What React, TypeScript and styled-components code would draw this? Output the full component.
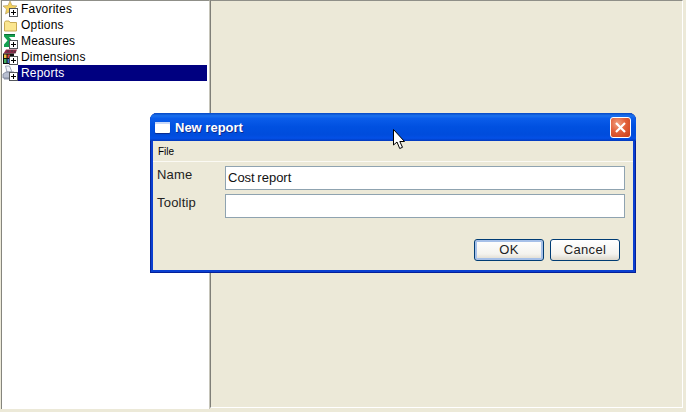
import React from 'react'
import styled, { createGlobalStyle } from 'styled-components'

const Global = createGlobalStyle`
  html, body { margin: 0; padding: 0; background: #ece9d8; }
  body { font-family: "Liberation Sans", Arial, sans-serif; }
`

const Screen = styled.div`
  position: relative;
  width: 686px;
  height: 412px;
  overflow: hidden;
  background: #ece9d8;
  display: flex;
  align-items: flex-start;
  padding-left: 1px;
  box-sizing: border-box;
`

const TreePanel = styled.div`
  width: 209px;
  height: 409px;
  box-sizing: border-box;
  background: #fff;
  border-top: 1px solid #8f8f88;
  border-left: 1px solid #85857d;
  border-right: 1px solid #c6c5ba;
`

const Row = styled.div`
  height: 16px;
  display: flex;
  align-items: center;
`

const IconSlot = styled.div`
  width: 16px;
  height: 16px;
  flex: none;
`

const RowLabel = styled.div<{ $selected?: boolean }>`
  flex: 1;
  height: 16px;
  margin-right: 2px;
  padding-left: 3px;
  font-size: 12px;
  letter-spacing: 0.2px;
  line-height: 16px;
  color: ${p => (p.$selected ? '#fff' : '#000')};
  background: ${p => (p.$selected ? '#000080' : 'transparent')};
`

const RightPanel = styled.div`
  flex: none;
  width: 473px;
  height: 408px;
  box-sizing: border-box;
  border-top: 1px solid #8f8f88;
  border-left: 1px solid #7f7f78;
  border-right: 1px solid #fff;
  border-bottom: 1px solid #fff;
`

const Dialog = styled.div`
  position: absolute;
  left: 150px;
  top: 113px;
  width: 486px;
  height: 160px;
  box-sizing: border-box;
  border-radius: 7px 7px 0 0;
  background: #0a3fd0;
  display: flex;
  flex-direction: column;
  padding: 0 3px 3px;
  box-shadow: inset 1px 0 0 #04249a, inset -1px 0 0 #04209a, inset 0 -1px 0 #04209a;
`

const TitleBar = styled.div`
  height: 28px;
  margin: 0 -3px;
  padding: 0 5px 0 5px;
  flex: none;
  border-radius: 7px 7px 0 0;
  display: flex;
  align-items: center;
  background: linear-gradient(180deg, #0648c4 0%, #1a70ee 10%, #0a5cea 20%, #0050e0 50%, #004cdc 78%, #0450e6 90%, #0238bc 100%);
`

const TitleIcon = styled.div`
  width: 15px;
  height: 11px;
  border-radius: 1px;
  background: #fff;
  box-shadow: inset 0 2px 0 #c8d8f8, 0 1px 1px #0a2a8a;
  margin-right: 5px;
`

const TitleText = styled.div`
  flex: 1;
  color: #fff;
  font-size: 13px;
  font-weight: bold;
  text-shadow: 1px 1px 0 #0a2a90;
`

const CloseButton = styled.div`
  width: 21px;
  height: 21px;
  box-sizing: border-box;
  border: 1px solid #fff;
  border-radius: 3px;
  background: radial-gradient(circle at 35% 30%, #f0a080 0%, #e2603a 45%, #c83c18 100%);
  display: flex;
  align-items: center;
  justify-content: center;
`

const Body = styled.div`
  flex: 1;
  background: #ece9d8;
  display: flex;
  flex-direction: column;
`

const MenuBar = styled.div`
  height: 21px;
  flex: none;
  box-sizing: border-box;
  border-bottom: 1px solid #fbfaf4;
  padding: 1px 0 0 5px;
  font-size: 10px;
  line-height: 20px;
  color: #000;
`

const Form = styled.div`
  flex: 1;
  padding: 4px 8px 0 4px;
  display: flex;
  flex-direction: column;
  gap: 4px;
`

const FieldRow = styled.div`
  display: flex;
  height: 24px;
`

const FieldLabel = styled.div`
  width: 68px;
  flex: none;
  font-size: 13px;
  letter-spacing: 0.2px;
  line-height: 18px;
  color: #222;
`

const FieldBox = styled.div`
  flex: 1;
  box-sizing: border-box;
  border: 1px solid #8fa3b0;
  background: #fff;
  padding-left: 2px;
  font-size: 13px;
  word-spacing: -1px;
  line-height: 21px;
  color: #111;
`

const Buttons = styled.div`
  display: flex;
  justify-content: flex-end;
  gap: 6px;
  margin-top: 17px;
  padding-right: 5px;
`

const Button = styled.div<{ $focused?: boolean }>`
  width: 70px;
  height: 22px;
  box-sizing: border-box;
  border: 1px solid #003c74;
  border-radius: 3px;
  font-size: 13px;
  letter-spacing: 0.3px;
  line-height: 20px;
  text-align: center;
  color: #222;
  background: linear-gradient(180deg, #ffffff 0%, #f4f3ee 70%, #dcd8cc 100%);
  box-shadow: ${p => (p.$focused ? 'inset 0 0 0 2px #a6c0e8' : 'none')};
`

const Cursor = styled.svg`
  position: absolute;
  left: 393px;
  top: 129px;
`

const Plus = () => (
  <g>
    <rect x="7.500" y="7.500" width="8" height="8" fill="#fff" stroke="#55585c" />
    <path d="M9 11.500h5M11.500 9v5" stroke="#000" />
  </g>
)

const StarIcon = () => (
  <svg width="16" height="16" viewBox="0 0 16 16">
    <path d="M8 0l2 4.500 5 .5-3.600 3.200 1 5L8 10.500 3.500 13l1-5L1 5l5-.5z" fill="#f4d25e" stroke="#b8a060" strokeWidth="0.7" />
    <Plus />
  </svg>
)

const FolderIcon = () => (
  <svg width="16" height="16" viewBox="0 0 16 16">
    <path d="M2.500 14V5.500l1-1.500h3.500l1 1.500h6.500V14z" fill="#fbe68f" stroke="#c8aa55" />
  </svg>
)

const SigmaIcon = () => (
  <svg width="16" height="16" viewBox="0 0 16 16">
    <path d="M2 1h11v3H7l3 3.500L7 11h6v3H2v-2.500L5.500 7.500 2 3.500z" fill="#14a050" />
    <path d="M2 1h11v1H3.500z" fill="#0c6a34" />
    <Plus />
  </svg>
)

const CubeIcon = () => (
  <svg width="16" height="16" viewBox="0 0 16 16">
    <path d="M4 .500h11L13.500 4.500H1.500z" fill="#8c2a4a" />
    <path d="M5 1.500h2v1H5zM9 1.500h2v1H9zM12 2.500h2v1h-2z" fill="#3a3a3a" />
    <rect x="1" y="4.500" width="11" height="10.500" fill="#111" />
    <rect x="2" y="5.500" width="2.500" height="3.500" fill="#f0c040" />
    <rect x="5.500" y="5.500" width="2.500" height="3.500" fill="#d04040" />
    <rect x="2" y="10" width="2.500" height="4" fill="#40b060" />
    <rect x="5.500" y="10" width="2.500" height="4" fill="#4070d0" />
    <Plus />
  </svg>
)

const ReportIcon = () => (
  <svg width="16" height="16" viewBox="0 0 16 16">
    <path d="M3.500 1h4l2.500 6H5z" fill="#f2f4fa" stroke="#8a94aa" strokeWidth="0.8" />
    <path d="M1 9l3-2h8l2 2v4H1z" fill="#b8bfd0" stroke="#7a8296" strokeWidth="0.8" />
    <path d="M2 13h10v1.500H2z" fill="#8e96aa" />
    <Plus />
  </svg>
)

const items = [
  { label: 'Favorites', icon: <StarIcon /> },
  { label: 'Options', icon: <FolderIcon /> },
  { label: 'Measures', icon: <SigmaIcon /> },
  { label: 'Dimensions', icon: <CubeIcon /> },
  { label: 'Reports', icon: <ReportIcon />, selected: true },
]

const App: React.FC = () => {
  return (
    <Screen>
      <Global />
      <TreePanel>
        {items.map(item => (
          <Row key={item.label}>
            <IconSlot>{item.icon}</IconSlot>
            <RowLabel $selected={item.selected}>{item.label}</RowLabel>
          </Row>
        ))}
      </TreePanel>
      <RightPanel />
      <Dialog>
        <TitleBar>
          <TitleIcon />
          <TitleText>New report</TitleText>
          <CloseButton>
            <svg width="13" height="13" viewBox="0 0 13 13">
              <path d="M2 2l9 9M11 2l-9 9" stroke="#fff" strokeWidth="2.2" />
            </svg>
          </CloseButton>
        </TitleBar>
        <Body>
          <MenuBar>File</MenuBar>
          <Form>
            <FieldRow>
              <FieldLabel>Name</FieldLabel>
              <FieldBox>Cost report</FieldBox>
            </FieldRow>
            <FieldRow>
              <FieldLabel>Tooltip</FieldLabel>
              <FieldBox />
            </FieldRow>
            <Buttons>
              <Button $focused>OK</Button>
              <Button>Cancel</Button>
            </Buttons>
          </Form>
        </Body>
      </Dialog>
      <Cursor width="13" height="21" viewBox="0 0 13 21">
        <path d="M.5.500v15.500l3.500-3 2.700 6.500 2.800-1.200L6.800 12.500h4.700z" fill="#fff" stroke="#000" />
      </Cursor>
    </Screen>
  )
}

export default App
